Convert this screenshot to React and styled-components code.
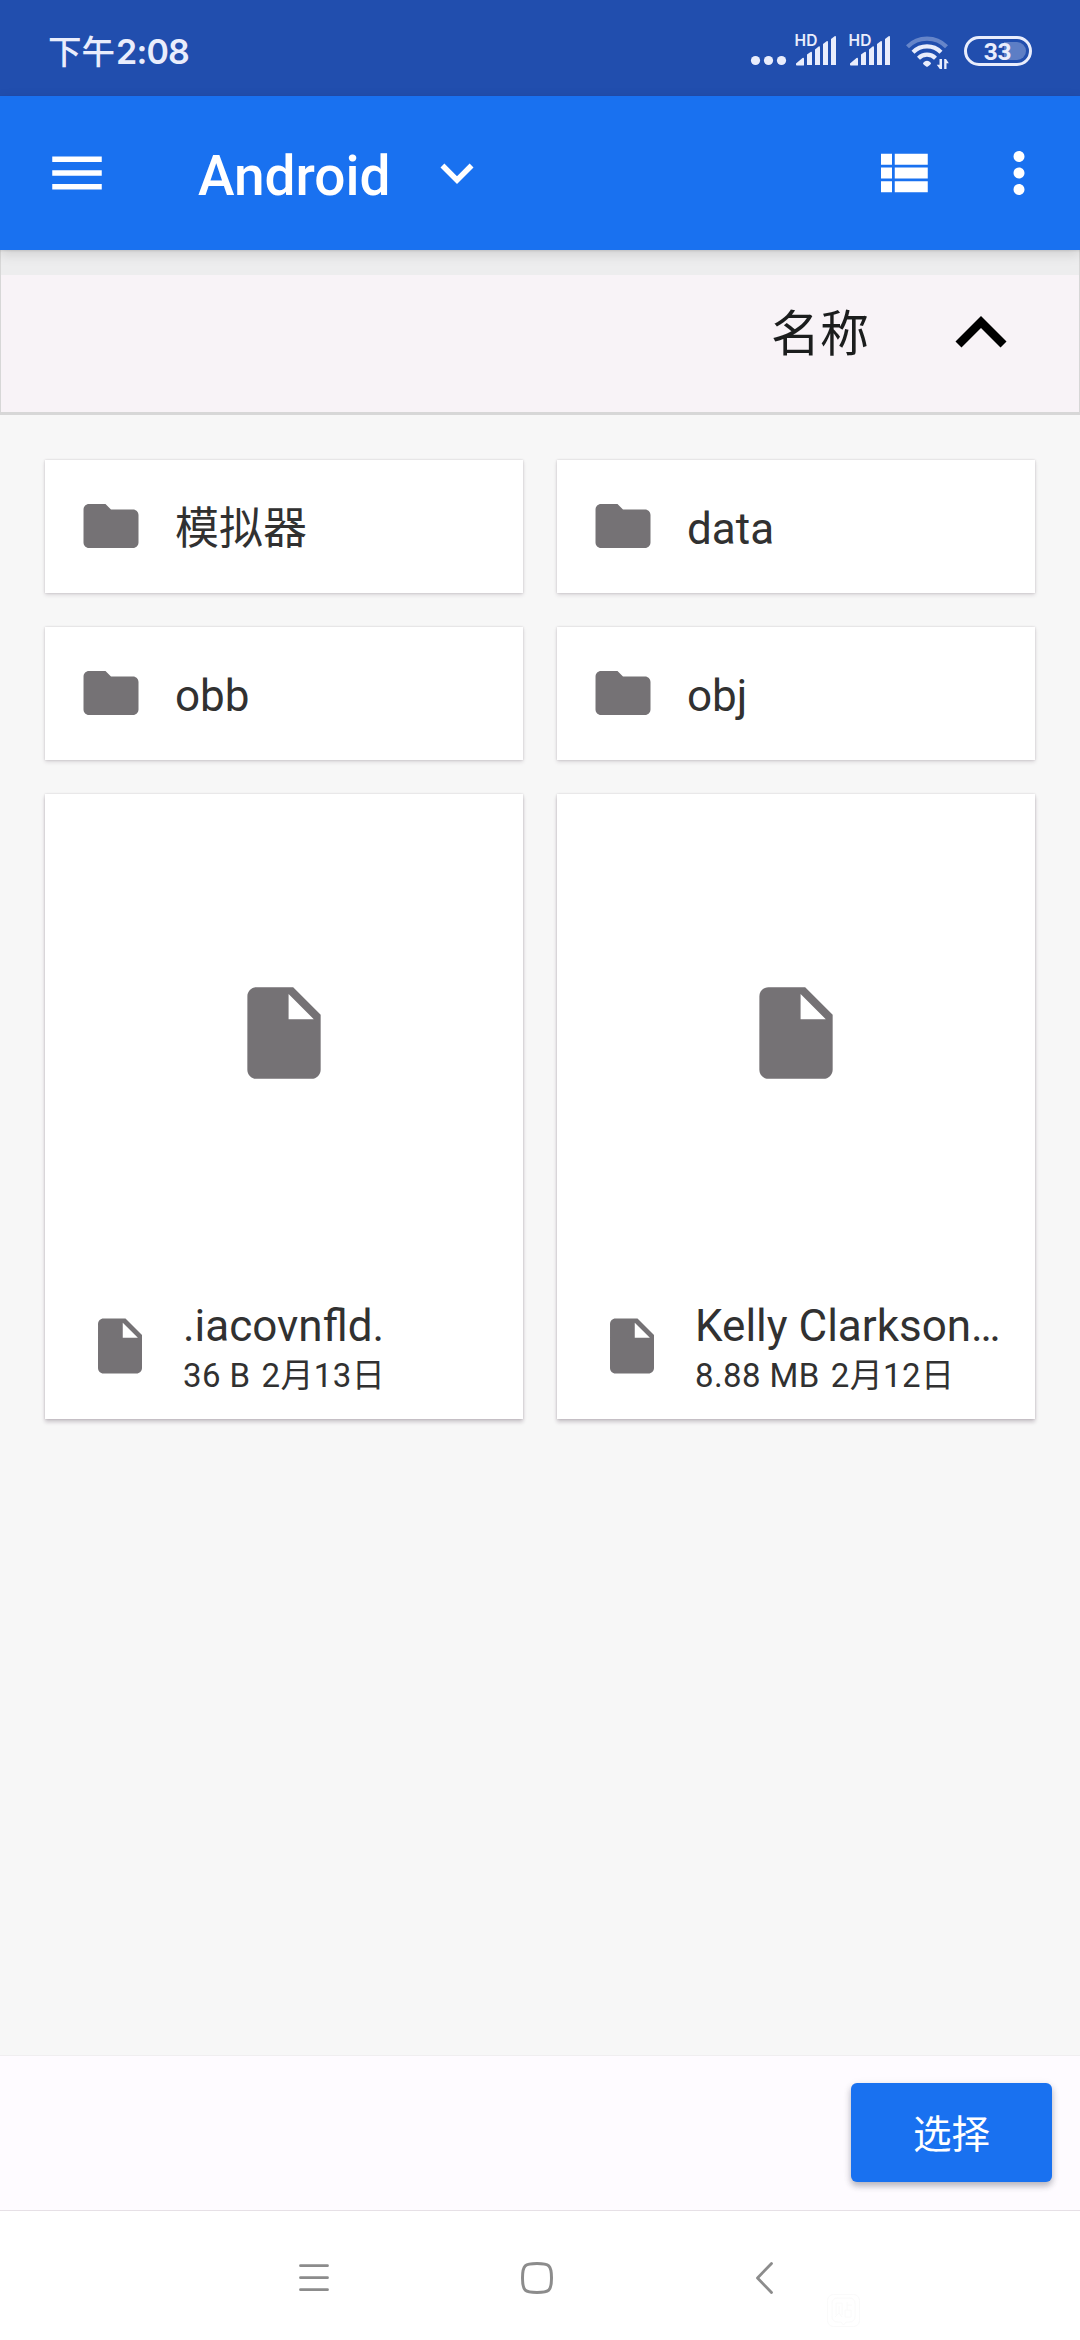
import React from "react";
import styled, { createGlobalStyle } from "styled-components";

const GlobalStyle = createGlobalStyle`
  * { box-sizing: border-box; }
  html, body { margin: 0; padding: 0; }
  body {
    width: 1080px;
    background: #f7f7f7;
    font-family: Roboto, "Noto Sans CJK SC", sans-serif;
    color: #313131;
  }
  svg { display: block; flex: none; }
`;

const Screen = styled.div`
  width: 1080px;
  height: 2340px;
  display: flex;
  flex-direction: column;
  overflow: hidden;
  background: #f7f7f7;
`;

const StatusBar = styled.header`
  height: 96px;
  flex: none;
  display: flex;
  align-items: center;
  justify-content: space-between;
  padding: 6px 48px 0 48px;
  background: #214eae;
  color: #e9edfc;
`;

const Clock = styled.time`
  display: flex;
  align-items: baseline;
  font-family: Inter, "Noto Sans CJK SC", sans-serif;
  font-size: 33.5px;
  line-height: 48px;
  font-weight: 500;
  padding-top: 2px;
`;

const Digits = styled.span`
  font-weight: 600;
  font-size: 34px;
  letter-spacing: -0.8px;
  margin-left: 1px;
`;

const StatusIcons = styled.div`
  display: flex;
  align-items: center;
`;

const AppBar = styled.nav`
  position: relative;
  z-index: 1;
  height: 154px;
  flex: none;
  display: flex;
  align-items: center;
  padding: 0 28px 0 44px;
  background: #1971f0;
  color: #fff;
  box-shadow: 0 1px 2px rgba(0, 0, 0, 0.1), 0 4px 12px rgba(0, 0, 0, 0.13);
`;

const Title = styled.h1`
  margin: 0 0 0 88px;
  font-size: 55px;
  line-height: 66px;
  font-weight: 500;
  padding-top: 5px;
`;

const Actions = styled.div`
  margin-left: auto;
  display: flex;
  gap: 50px;
`;

const Caret = styled.div`
  margin-left: 33px;
`;

const SortBar = styled.div`
  height: 165px;
  flex: none;
  display: flex;
  align-items: center;
  justify-content: flex-end;
  padding: 3px 47px 0 0;
  background: linear-gradient(#ededee 0 25px, #f8f3f7 25px);
  border: solid #d7d7d7;
  border-width: 0 1px 3px;
  color: #1b1d1d;
  font-size: 49px;
  line-height: 70px;
`;

const SortLabel = styled.span`
  margin-right: 61px;
  padding-top: 4px;
`;

const Grid = styled.main`
  flex: 1;
  display: grid;
  grid-template-columns: 478px 478px;
  grid-auto-rows: max-content;
  gap: 34px;
  padding: 45px;
  align-content: start;
`;

const Card = styled.article`
  background: #fff;
  box-shadow: 0 0 2px rgba(40, 20, 40, 0.16), 0 2px 4px rgba(40, 20, 40, 0.14);
  color: #313131;
`;

const FolderCard = styled(Card)`
  height: 133px;
  display: flex;
  align-items: center;
  padding: 0 0 1px 33px;
  gap: 31px;
`;

const FolderName = styled.span`
  font-size: 44px;
  line-height: 52px;
  padding-top: 6px;
`;

const FileCard = styled(Card)`
  height: 625px;
  display: flex;
  flex-direction: column;
  box-shadow: 0 0 2px rgba(40, 20, 40, 0.16), 0 3px 4px rgba(40, 20, 40, 0.22);
`;

const Preview = styled.div`
  height: 478px;
  display: flex;
  align-items: center;
  justify-content: center;
`;

const FileInfo = styled.div`
  height: 147px;
  display: flex;
  padding: 41px 0 0 42px;
  gap: 30px;
`;

const FileText = styled.div`
  min-width: 0;
  flex: 1;
  margin-top: -13px;
`;

const FileName = styled.div`
  font-size: 44px;
  line-height: 52px;
  white-space: nowrap;
`;

const FileMeta = styled.div`
  display: flex;
  gap: 11px;
  margin-top: 2px;
  font-size: 33px;
  line-height: 44px;
  letter-spacing: 0.4px;
  white-space: nowrap;
`;

const PickerBar = styled.footer`
  height: 156px;
  flex: none;
  display: flex;
  justify-content: flex-end;
  align-items: flex-start;
  padding: 27px 28px 0;
  background: #fefbff;
  border-top: 1px solid #f0eef0;
  border-bottom: 1px solid #e6e0e6;
`;

const SelectButton = styled.button`
  width: 201px;
  height: 99px;
  padding: 4px 0 0;
  border: 0;
  border-radius: 6px;
  background: #1971f0;
  color: #fff;
  font: 400 38.5px/56px Roboto, "Noto Sans CJK SC", sans-serif;
  box-shadow: 0 4px 6px rgba(30, 30, 50, 0.28), 0 2px 10px rgba(30, 30, 50, 0.08);
`;

const SystemNav = styled.nav`
  height: 129px;
  flex: none;
  display: flex;
  align-items: flex-start;
  padding: 47px 0 0 294px;
  background: #fff;
`;

const NavSlot = styled.div`
  margin-right: ${(p) => p.$after || 0}px;
`;

const StampSlot = styled.div`
  margin-top: 35px;
`;

const Glyph = ({ size = 66, color = "currentColor", d }) => (
  <svg width={size} height={size} viewBox="0 0 24 24" fill={color}>
    <path d={d} />
  </svg>
);

const paths = {
  menu: "M3 18h18v-2H3v2zm0-5h18v-2H3v2zm0-7v2h18V6H3z",
  down: "M16.59 8.59 12 13.17 7.41 8.59 6 10l6 6 6-6z",
  up: "M12 8l-6 6 1.41 1.41L12 10.83l4.59 4.58L18 14z",
  list: "M4 14h4v-4H4v4zm0 5h4v-4H4v4zM4 9h4V5H4v4zm5 5h12v-4H9v4zm0 5h12v-4H9v4zM9 5v4h12V5H9z",
  more: "M12 8c1.1 0 2-.9 2-2s-.9-2-2-2-2 .9-2 2 .9 2 2 2zm0 2c-1.1 0-2 .9-2 2s.9 2 2 2 2-.9 2-2-.9-2-2-2zm0 6c-1.1 0-2 .9-2 2s.9 2 2 2 2-.9 2-2-.9-2-2-2z",
  folder: "M10 4H4c-1.1 0-1.99.9-1.99 2L2 18c0 1.1.9 2 2 2h16c1.1 0 2-.9 2-2V8c0-1.1-.9-2-2-2h-8l-2-2z",
  file: "M6 2c-1.1 0-1.99.9-1.99 2L4 20c0 1.1.89 2 1.99 2H18c1.1 0 2-.9 2-2V8l-6-6H6zm7 7V3.5L18.5 9H13z",
};

const Bars = ({ x }) => (
  <g transform={`translate(${x} 0)`}>
    <text x="-1.5" y="16" fontFamily="Inter, sans-serif" fontSize="15.5" fontWeight="600" letterSpacing="0.2">
      HD
    </text>
    <path d="M0 34.5v-1l6.5-5.5q1.5-.8 1.5 1v6q0 .6-.6.6h-6.6q-.8 0-.8-1z" />
    <path d="M11 24.5l3.6-2.5q1.4-.6 1.4 1v12h-5z" />
    <path d="M19 19.5l3.6-3q1.4-.6 1.4 1v17.5h-5z" />
    <path d="M27 14l3.6-2.8q1.4-.6 1.4 1v22.8h-5z" />
    <path d="M35 9l3.6-2.8q1.4-.6 1.4 1v27.8h-5z" />
  </g>
);

const Signals = () => (
  <svg width="284" height="42" viewBox="0 0 284 42" fill="#e9edfc">
    <circle cx="7.5" cy="30.5" r="4.6" />
    <circle cx="20.5" cy="30.5" r="4.6" />
    <circle cx="33.5" cy="30.5" r="4.6" />
    <Bars x={48} />
    <Bars x={102} />
    <g fill="none" stroke="#e9edfc" strokeWidth="4.2" transform="translate(0 -0.8)">
      <path d="M159.5 17.5a27.5 27.5 0 0 1 39 0" opacity="0.35" />
      <path d="M165 23a19.8 19.8 0 0 1 28 0" />
      <path d="M170.5 29a12 12 0 0 1 17 0" />
    </g>
    <path d="M175 33q4-4.5 8 0q.3 1.5-4 4q-4.3-2.5-4-4z" />
    <path d="M194 29v10h-2.2l-3-4.200h2.700v-5.800zM196.200 39V29h1.800l2.800 4.200h-2.300V39z" />
    <rect x="217.5" y="7.5" width="65" height="27" rx="13.5" fill="none" stroke="#e9edfc" strokeWidth="3" />
    <path d="M256 12h13a9 9 0 0 1 0 18H256z" opacity="0.3" />
    <text x="249.5" y="30" textAnchor="middle" fontFamily="Roboto, sans-serif" fontSize="24.5" fontWeight="700" letterSpacing="-0.4">
      33
    </text>
  </svg>
);

const folders = ["模拟器", "data", "obb", "obj"];
const files = [
  { name: ".iacovnfld.", size: "36 B", date: "2月13日" },
  { name: "Kelly Clarkson…", size: "8.88 MB", date: "2月12日" },
];

export default function App() {
  return (
    <Screen>
      <GlobalStyle />
      <StatusBar>
        <Clock>
          下午<Digits>2:08</Digits>
        </Clock>
        <StatusIcons>
          <Signals />
        </StatusIcons>
      </StatusBar>
      <AppBar>
        <Glyph d={paths.menu} />
        <Title>Android</Title>
        <Caret>
          <Glyph d={paths.down} />
        </Caret>
        <Actions>
          <Glyph d={paths.list} />
          <Glyph d={paths.more} />
        </Actions>
      </AppBar>
      <SortBar>
        <SortLabel>名称</SortLabel>
        <Glyph size={102} color="#000" d={paths.up} />
      </SortBar>
      <Grid>
        {folders.map((name) => (
          <FolderCard key={name}>
            <Glyph color="#757275" d={paths.folder} />
            <FolderName>{name}</FolderName>
          </FolderCard>
        ))}
        {files.map((f) => (
          <FileCard key={f.name}>
            <Preview>
              <Glyph size={110} color="#757275" d={paths.file} />
            </Preview>
            <FileInfo>
              <Glyph color="#757275" d={paths.file} />
              <FileText>
                <FileName>{f.name}</FileName>
                <FileMeta>
                  <span>{f.size}</span>
                  <span>{f.date}</span>
                </FileMeta>
              </FileText>
            </FileInfo>
          </FileCard>
        ))}
      </Grid>
      <PickerBar>
        <SelectButton>选择</SelectButton>
      </PickerBar>
      <SystemNav>
        <NavSlot $after={183}>
          <svg width="40" height="40" viewBox="0 0 40 40" stroke="#8c8c8c" strokeWidth="2.8" strokeLinecap="round">
            <path d="M6.5 7.7h27M6.5 19.7h27M6.5 31.7h27" />
          </svg>
        </NavSlot>
        <NavSlot $after={187}>
          <svg width="40" height="40" viewBox="0 0 40 40" fill="none" stroke="#8c8c8c" strokeWidth="3">
            <path d="M20 5.5c12 0 14.500 1.500 14.500 14.500s-2.500 14.500-14.500 14.500S5.500 33 5.500 20 8 5.500 20 5.500z" />
          </svg>
        </NavSlot>
        <NavSlot $after={42}>
          <svg width="40" height="40" viewBox="0 0 40 40" fill="none" stroke="#8c8c8c" strokeWidth="2.8" strokeLinecap="round" strokeLinejoin="round">
            <path d="M27.5 5.5L13.500 20l14 14.500" />
          </svg>
        </NavSlot>
        <StampSlot>
          <svg width="36" height="36" viewBox="0 0 36 36" fill="none" stroke="#fafafa">
            <rect x="1.500" y="1.500" width="32" height="32" rx="6" />
            <path d="M12 5h11q6 0 6 6v12q0 6-6 6h-3l-2.500 3-2.500-3h-3q-6 0-6-6V11q0-6 6-6z" />
            <path d="M10 22V10h6v12M13 13v7l-4 4M13 20l3 4M21 9v8M21 12h5M19 17h6v7h-6z" />
          </svg>
        </StampSlot>
      </SystemNav>
    </Screen>
  );
}
